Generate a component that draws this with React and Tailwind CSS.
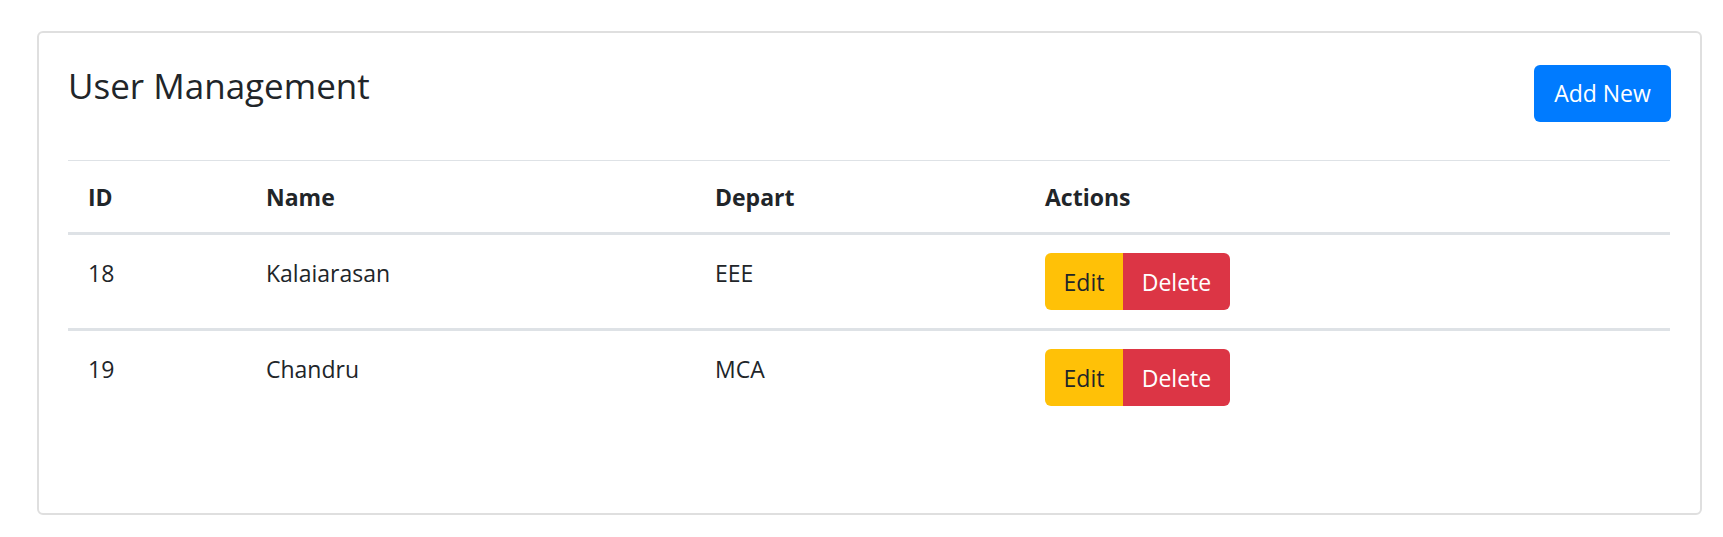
import React from 'react';

const users = [
  { id: 18, name: 'Kalaiarasan', depart: 'EEE' },
  { id: 19, name: 'Chandru', depart: 'MCA' },
];

export default function App() {
  return (
    <div className="min-h-screen bg-white pt-[31px] pl-[37px] text-[#212529] font-['Segoe_UI','Open_Sans',sans-serif]">
      <div className="w-[1665px] h-[484px] border-2 border-[#dfdfdf] rounded-[6px] px-[29px] pt-[29px]">
        {/* Header */}
        <div className="flex justify-between items-start mb-[38px]">
          <h4 className="mt-[2px] text-[35px] leading-[43px] font-medium">User Management</h4>
          <button className="mt-[3px] w-[137px] h-[57px] rounded-[6px] bg-[#007bff] text-white text-[23px]">
            Add New
          </button>
        </div>

        {/* Table */}
        <table className="w-[1602px] border-separate border-spacing-0 text-[23px] leading-[36px]">
          <thead>
            <tr>
              <th className="w-[178px] text-left font-bold px-[20px] pt-[18px] pb-[17px] border-t border-b-[3px] border-[#dee2e6]">ID</th>
              <th className="w-[449px] text-left font-bold px-[20px] pt-[18px] pb-[17px] border-t border-b-[3px] border-[#dee2e6]">Name</th>
              <th className="w-[330px] text-left font-bold px-[20px] pt-[18px] pb-[17px] border-t border-b-[3px] border-[#dee2e6]">Depart</th>
              <th className="text-left font-bold px-[20px] pt-[18px] pb-[17px] border-t border-b-[3px] border-[#dee2e6]">Actions</th>
            </tr>
          </thead>
          <tbody>
            {users.map((u, i) => (
              <tr key={u.id}>
                <td className={`align-top px-[20px] py-[18px] leading-[40px] ${i > 0 ? 'border-t-[3px] border-[#dee2e6]' : ''}`}>{u.id}</td>
                <td className={`align-top px-[20px] py-[18px] leading-[40px] ${i > 0 ? 'border-t-[3px] border-[#dee2e6]' : ''}`}>{u.name}</td>
                <td className={`align-top px-[20px] py-[18px] leading-[40px] ${i > 0 ? 'border-t-[3px] border-[#dee2e6]' : ''}`}>{u.depart}</td>
                <td className={`align-top px-[20px] py-[18px] ${i > 0 ? 'border-t-[3px] border-[#dee2e6]' : ''}`}>
                  <div className="flex">
                    <button className="w-[78px] h-[57px] rounded-l-[6px] bg-[#ffc107] text-[#212529]">Edit</button>
                    <button className="w-[107px] h-[57px] rounded-r-[6px] bg-[#dc3545] text-white">Delete</button>
                  </div>
                </td>
              </tr>
            ))}
          </tbody>
        </table>
      </div>
    </div>
  );
}
